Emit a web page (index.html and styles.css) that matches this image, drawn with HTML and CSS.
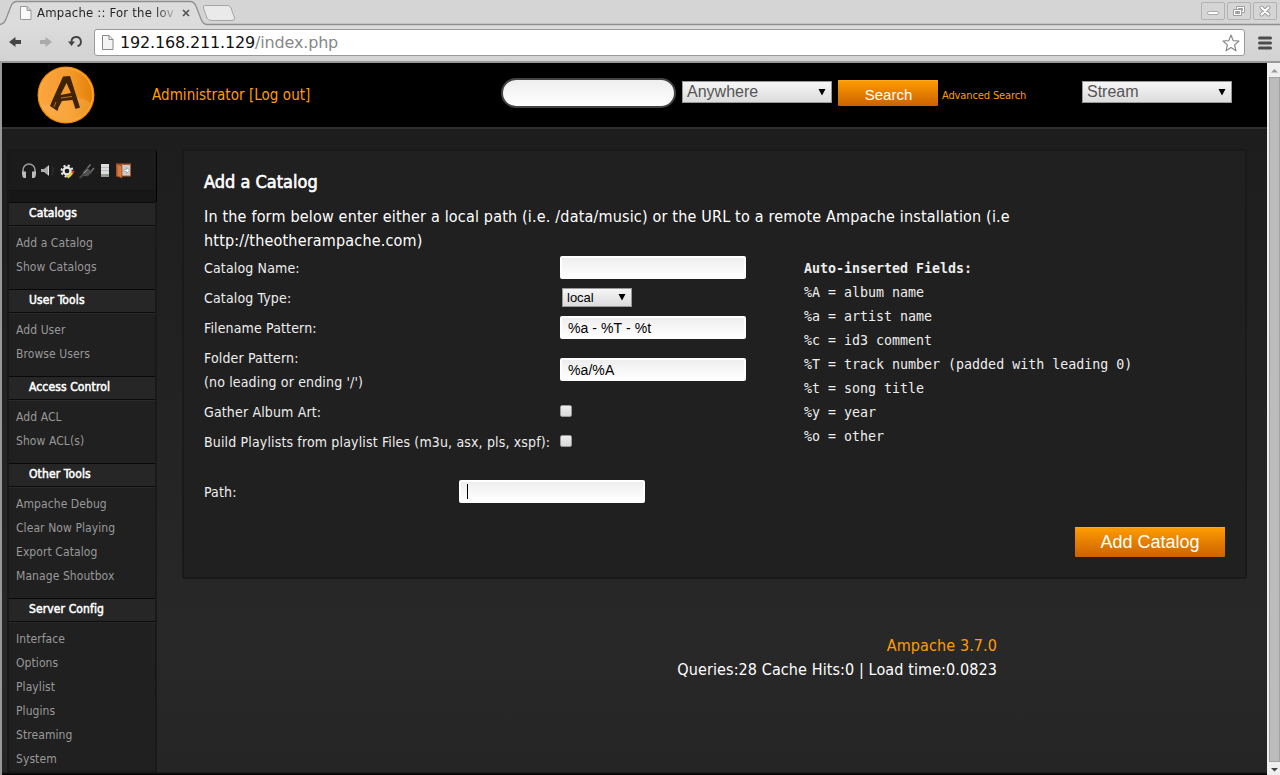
FILE: index.html
```html
<!DOCTYPE html>
<html lang="en">
<head>
<meta charset="utf-8">
<title>Ampache :: For the love of music</title>
<link rel="stylesheet" href="styles.css">
</head>
<body>
<div class="window">
  <div class="tabstrip">
    <svg class="tabshape" width="1280" height="26" viewBox="0 0 1280 26">
      <path d="M0 24.5Q4 24 6 19L11 6Q13 1.500 17 1.500H190Q194 1.500 196 6L201 19Q203 24.500 207 24.500H1280V26H0Z" fill="#dcdcdc"/>
      <path d="M0 24.500Q4 24 6 19L11 6Q13 1.500 17 1.500H190Q194 1.500 196 6L201 19Q203 24.500 207 24.500H1280" fill="none" stroke="#8f8f8f" stroke-width="1.300"/>
      <path d="M205 5.500H227Q230 5.500 231 8L234.500 18Q235 20.500 232 20.500H212Q208 20.500 207 18L203.500 8Q203 5.500 205 5.500Z" fill="#eaeaea" stroke="#a5a5a5"/>
    </svg>
    <svg class="page-icon" width="12" height="14" viewBox="0 0 12 14"><path d="M.5.5H7L11 4.500V13.500H.5ZM7 .5V4.500H11" fill="#fafafa" stroke="#999"/></svg>
    <span class="tab-title">Ampache :: For the lov</span>
    <svg class="tab-close" width="8" height="8" viewBox="0 0 8 8"><path d="M1 1L7 7M7 1L1 7" stroke="#555" stroke-width="1.700"/></svg>
    <div class="window-buttons">
      <span><svg width="22" height="16" viewBox="0 0 22 16"><rect x="5.500" y="8.500" width="11" height="3" rx="1.500" fill="#fff" stroke="#aaa"/></svg></span>
      <span><svg width="22" height="16" viewBox="0 0 22 16"><g fill="#fff" stroke="#9e9e9e"><path d="M8.500 3.500H16.500V9.500H8.500ZM10.500 5.500V7.500H14.500V5.500Z" fill-rule="evenodd"/><path d="M5.500 6.500H13.500V12.500H5.500ZM7.500 8.500V10.500H11.500V8.500Z" fill-rule="evenodd"/></g></svg></span>
      <span><svg width="22" height="16" viewBox="0 0 22 16"><path d="M7.500 4.500L14.500 11.500M14.500 4.500L7.500 11.500" stroke="#9e9e9e" stroke-width="4" stroke-linecap="round"/><path d="M7.500 4.500L14.500 11.500M14.500 4.500L7.500 11.500" stroke="#fff" stroke-width="2" stroke-linecap="round"/></svg></span>
    </div>
  </div>
  <div class="toolbar">
    <svg class="nav-icons" width="94" height="36" viewBox="0 25 94 36">
      <path d="M9 42L15.500 37V40H21V44H15.500V47Z" fill="#444"/>
      <path d="M52 42L45.500 37V40H40V44H45.500V47Z" fill="#aaa"/>
      <path d="M71.500 43V41.500A4.700 4.700 0 1 1 77.500 46.200" fill="none" stroke="#444" stroke-width="1.900"/><path d="M68 41.500H75L71.500 46Z" fill="#444"/>
    </svg>
    <div class="address">
      <svg width="12" height="15" viewBox="0 0 12 15"><path d="M.5.5H7L11 4.500V14.500H.5ZM7 .5V4.500H11" fill="#f4f4f4" stroke="#888"/></svg>
      <span class="url">192.168.211.129<i>/index.php</i></span>
      <svg class="star" width="18" height="18" viewBox="0 0 18 18"><path d="M9 1L11.200 6.600L17 7L12.600 10.900L14 16.800L9 13.600L4 16.800L5.400 10.900L1 7L6.800 6.600Z" fill="#fff" stroke="#888" stroke-width="1.200" stroke-linejoin="round"/></svg>
    </div>
    <svg class="burger" width="14" height="14" viewBox="0 0 14 14"><path d="M1.500 2H12.500M1.500 7H12.500M1.500 12H12.500" stroke="#4c4c4c" stroke-width="3" stroke-linecap="round"/></svg>
  </div>
  <div class="viewport">
    <div class="page">
      <header class="header">
        <svg class="logo" width="62" height="62" viewBox="0 0 62 62">
          <defs><linearGradient id="orb"><stop offset="0" stop-color="#fba540"/><stop offset=".55" stop-color="#f59a2c"/><stop offset="1" stop-color="#e38206"/></linearGradient></defs>
          <circle cx="31" cy="31" r="28.500" fill="#f58a00"/><circle cx="31" cy="31" r="26.700" fill="url(#orb)" stroke="#ffb24e" stroke-width="1"/>
          <path d="M5 40Q17 42 26 38Q42 29 56 39Q51 53 39 56Q18 60 5 40Z" fill="#ffb95e" opacity=".35"/>
          <path d="M28 12.500L35 12L45 43.500L40.500 45L37.500 36L27 37L23.500 43.500L22.500 47L15 42L17 37Z M31.500 19L25.500 31L36 29Z" fill="#3e2309" fill-rule="evenodd"/><path d="M26 34L37 32.500M21 38L19 43" stroke="#c87822" stroke-width=".9"/>
        </svg>
        <div class="user"><a>Administrator</a> <a>[Log out]</a></div>
        <input class="search" type="text" aria-label="Search">
        <div class="select select-large where"><span>Anywhere</span><svg width="8" height="8" viewBox="0 0 8 8"><path d="M.5 1H7.500L4 7.500Z"/></svg></div>
        <button class="button search-button">Search</button>
        <a class="advanced">Advanced Search</a>
        <div class="select select-large stream"><span>Stream</span><svg width="8" height="8" viewBox="0 0 8 8"><path d="M.5 1H7.500L4 7.500Z"/></svg></div>
      </header>
      <div class="columns">
        <nav class="sidebar">
          <div class="icons">
            <svg width="112" height="18" viewBox="20 162 112 18">
              <path d="M23 172V170A6 6 0 0 1 35 170V172" fill="none" stroke="#999" stroke-width="1.600"/><path d="M22 171.500H26V178H24Q22 177 22 174ZM36 171.500H32V178H34Q36 177 36 174Z" fill="#bbb"/>
              <path d="M41 169H44L49 165V176L44 172H41Z" fill="#aaa"/><path d="M48.500 166V175" stroke="#ddd"/><path d="M52 167Q54.500 171 52 175" fill="none" stroke="#2d2d2d" stroke-width="1.500"/>
              <circle cx="67" cy="171" r="3.500" fill="none" stroke="#e8e8e8" stroke-width="2.300"/><circle cx="67" cy="171" r="5.500" fill="none" stroke="#e8e8e8" stroke-width="2" stroke-dasharray="2.160 2.160"/><path d="M67.500 177.500L72.500 172.500" stroke="#e9cf38" stroke-width="2.500"/><path d="M72 173L74 171" stroke="#d33" stroke-width="2"/>
              <path d="M79.500 178L84 174" stroke="#484848" stroke-width="2"/><path d="M82.500 172.500L87 167.500L92 172.500L88 176Q84 177 82.500 175Z" fill="#505050"/><path d="M84 173L87.500 169.500" stroke="#999"/><path d="M87.500 168L90.500 164.500M91 171.500L94 168" stroke="#777" stroke-width="1.400"/>
              <path d="M101 164H109V177H101Z" fill="#ddd"/><path d="M101 167.500H109M101 170.500H109" stroke="#bbb"/><path d="M101 174H109V177H101Z" fill="#999"/><path d="M106 175.500H108" stroke="#4b4"/>
              <path d="M116 163.500H131V176.500H116Z" fill="#b5562a"/><path d="M122 165H130V175.500H122Z" fill="#ccc"/><path d="M117 164L122 166V178L117 176Z" fill="#d8793d" stroke="#934016" stroke-width=".7"/><path d="M124 169.500H126.500V167.500L129.500 170.500L126.500 173.500V171.500H124Z" fill="#fff" stroke="#888" stroke-width=".6"/>
            </svg>
          </div>
          <div class="icons-foot"></div>
          <section><h4>Catalogs</h4><ul><li>Add a Catalog</li><li>Show Catalogs</li></ul></section>
          <section><h4>User Tools</h4><ul><li>Add User</li><li>Browse Users</li></ul></section>
          <section><h4>Access Control</h4><ul><li>Add ACL</li><li>Show ACL(s)</li></ul></section>
          <section><h4>Other Tools</h4><ul><li>Ampache Debug</li><li>Clear Now Playing</li><li>Export Catalog</li><li>Manage Shoutbox</li></ul></section>
          <section><h4>Server Config</h4><ul><li>Interface</li><li>Options</li><li>Playlist</li><li>Plugins</li><li>Streaming</li><li>System</li></ul></section>
        </nav>
        <div class="content">
          <main class="panel">
            <h3>Add a Catalog</h3>
            <p class="intro">In the form below enter either a local path (i.e. /data/music) or the URL to a remote Ampache installation (i.e<br>http://theotherampache.com)</p>
            <div class="form">
              <div class="rows">
                <div class="row"><label>Catalog Name:</label><input class="field" type="text"></div>
                <div class="row"><label>Catalog Type:</label><div class="select type"><span>local</span><svg width="8" height="8" viewBox="0 0 8 8"><path d="M.5 1H7.500L4 7.500Z"/></svg></div></div>
                <div class="row"><label>Filename Pattern:</label><input class="field" type="text" value="%a - %T - %t"></div>
                <div class="row tall"><label>Folder Pattern:<br>(no leading or ending '/')</label><input class="field" type="text" value="%a/%A"></div>
                <div class="row"><label>Gather Album Art:</label><span class="check"></span></div>
                <div class="row"><label>Build Playlists from playlist Files (m3u, asx, pls, xspf):</label><span class="check"></span></div>
              </div>
              <div class="legend"><b>Auto-inserted Fields:</b><br>%A = album name<br>%a = artist name<br>%c = id3 comment<br>%T = track number (padded with leading 0)<br>%t = song title<br>%y = year<br>%o = other</div>
            </div>
            <div class="row path"><label>Path:</label><div class="field focused"><span class="caret"></span></div></div>
            <div class="actions"><button class="button add">Add Catalog</button></div>
          </main>
          <footer><a>Ampache 3.7.0</a><br>Queries:28 Cache Hits:0 | Load time:0.0823</footer>
        </div>
      </div>
    </div>
    <div class="scrollbar">
      <svg width="13" height="14" viewBox="0 0 13 14"><path d="M4 9.500L7.500 6L11 9.500Z" fill="#999"/></svg>
      <div class="thumb"></div>
      <svg width="13" height="13" viewBox="0 0 13 13"><path d="M4 6L7.500 9.500L11 6Z" fill="#444"/></svg>
    </div>
  </div>
</div>
</body>
</html>
```

FILE: styles.css
```css
* { box-sizing: border-box; }
body { margin: 0; overflow: hidden; font-family: "DejaVu Sans Condensed", "DejaVu Sans", sans-serif; font-stretch: condensed; }
h3, h4, p, ul { margin: 0; padding: 0; }
ul { list-style: none; }
svg { display: block; flex: none; }
input, button { font-family: "Liberation Sans", Arial, sans-serif; font-stretch: normal; margin: 0; }

.window { width: 1280px; height: 775px; display: flex; flex-direction: column; background: #989898; }

.tabstrip { position: relative; height: 25px; flex: none; display: flex; align-items: flex-start; background: #d5d5d5; }
.tabshape { position: absolute; left: 0; top: 0; }
.page-icon { position: relative; margin: 6px 0 0 20px; }
.tab-title { position: relative; margin-left: 5px; width: 139px; white-space: nowrap; line-height: 26px; font-size: 13px; letter-spacing: .2px; color: transparent; background: linear-gradient(90deg, #222 118px, #bbb 138px); -webkit-background-clip: text; background-clip: text; }
.tab-close { position: relative; margin: 9px 0 0 6px; }
.window-buttons { position: relative; display: flex; gap: 2px; margin: 2px 3px 0 auto; }
.window-buttons span { width: 24px; height: 18px; border: 1px solid #b2b2b2; border-radius: 2px; }

.toolbar { height: 36px; flex: none; display: flex; align-items: flex-start; background: linear-gradient(#dcdcdc, #d2d2d2); }
.address { margin-top: 4px; width: 1151px; height: 27px; display: flex; align-items: center; border: 1px solid #999; border-radius: 3px; background: #fff; padding: 0 4px 0 7px; }
.url { margin-left: 6px; font: 16px "DejaVu Sans", sans-serif; letter-spacing: -.16px; color: #111; }
.url i { font-style: normal; color: #888; }
.star { margin-left: auto; }
.burger { margin: 11px 0 0 13px; }

.viewport { height: 714px; padding: 2px 0 0 2px; display: flex; }
.page { width: 1265px; height: 712px; background: linear-gradient(#1d1d1d 66px, #282828 580px, #252525 709px, #050505 711px); }
.header { height: 66px; background: #000; border-bottom: 2px solid #303030; display: flex; align-items: flex-start; }
.logo { margin: 1px 0 0 33px; }
.user { margin: 20px 0 0 55px; width: 349px; font-size: 15px; letter-spacing: .05px; line-height: 24px; }
a { color: #ff9d00; }
.search { margin-top: 15px; width: 175px; height: 30px; border: 2px solid #444; border-radius: 15px; background: linear-gradient(#eee, #fff); }
.select { display: flex; align-items: center; justify-content: space-between; font-family: "Liberation Sans", Arial, sans-serif; font-stretch: normal; color: #000; border: 1px solid #999; background: linear-gradient(#f6f6f6, #dcdcdc); padding: 0 5px 0 4px; font-size: 13px; }
.select-large { width: 150px; height: 22px; margin-top: 18px; font-size: 16px; color: #555; }
.where { margin-left: 6px; }
.button { border: 0; border-radius: 1px; padding: 0; color: #fff; background: linear-gradient(#ff9d00, #cb6200); box-shadow: inset 0 1px 0 #ffa828; }
.search-button { width: 100px; height: 26px; margin: 17px 0 0 6px; font-size: 15px; padding: 2px 0 0 1px; }
.advanced { margin: 25px 0 0 4px; width: 140px; font-size: 11px; letter-spacing: -.12px; line-height: 16px; }

.columns { display: flex; align-items: flex-start; padding: 20px 20px 0 5px; }
.sidebar { width: 150px; height: 624px; border: 2px solid #191919; border-radius: 2px; background: #202020; }
.icons { height: 40px; padding: 11px 0 0 11px; background: #1b1b1b; border-bottom: 1px solid #141414; margin-right: -1px; box-shadow: 1px 0 #000; }
.icons-foot { height: 11px; background: #171717; margin-right: -1px; box-shadow: 1px 0 #000; }
.sidebar section { height: 87px; }
.sidebar section:nth-of-type(4) { height: 135px; }
.sidebar h4 { height: 24px; border-top: 1px solid #090909; border-bottom: 1px solid #0c0c0c; background: #262626; color: #fff; font-size: 12px; font-weight: normal; -webkit-text-stroke: .5px #fff; letter-spacing: .12px; line-height: 21px; padding-left: 20px; box-shadow: 0 1px #292929; }
.sidebar ul { padding: 5px 0 0 7px; }
.sidebar li { font-size: 12px; letter-spacing: .08px; line-height: 24px; color: #999; }

.content { margin-left: 25px; width: 1065px; }
.panel { height: 430px; border: 2px solid #191919; border-radius: 3px; background: #202020; padding: 17px 20px 0; color: #eee; }
.panel h3 { font-size: 18px; font-weight: normal; -webkit-text-stroke: .6px #fff; line-height: 28px; color: #fff; }
.intro { margin-top: 9px; height: 47px; font-size: 16px; letter-spacing: .18px; line-height: 24px; color: #fff; }
.form { display: flex; }
.rows { width: 600px; }
.row { display: flex; align-items: center; height: 30px; }
.row label { width: 356px; white-space: nowrap; font-size: 14px; letter-spacing: .15px; line-height: 24px; padding-top: 2px; }
.row.tall { height: 54px; }
.field { width: 186px; height: 23px; border: 2px solid #fff; border-radius: 2px; background: linear-gradient(#eee, #fff); padding: 2px 6px 0; font-size: 14px; letter-spacing: .08px; color: #000; }
.type { width: 70px; height: 19px; margin-left: 2px; }
.check { width: 12px; height: 12px; border: 1px solid #999; border-radius: 2px; background: linear-gradient(#eee, #d8d8d8); }
.legend { padding-top: 5px; height: 174px; font: 13.3px/24px "DejaVu Sans Mono", monospace; white-space: nowrap; font-stretch: normal; }
.path { margin-top: 20px; }
.path label { width: 255px; }
.focused { display: flex; align-items: center; padding-top: 0; }
.caret { width: 1px; height: 15px; background: #000; }
.actions { display: flex; justify-content: flex-end; margin-top: 21px; }
.add { width: 150px; height: 30px; font-size: 18px; }
footer { width: 815px; margin-top: 55px; text-align: right; font-size: 16px; letter-spacing: .1px; line-height: 24px; color: #fff; }

.scrollbar { width: 13px; background: #efefef; display: flex; flex-direction: column; }
.thumb { width: 11px; height: 685px; margin-left: 2px; background: #bcbcbc; border: 1px solid #a2a2a2; }
```
